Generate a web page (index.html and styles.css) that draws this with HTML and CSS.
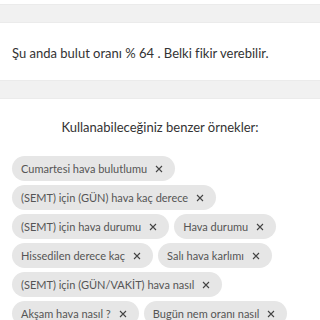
FILE: index.html
```html
<!DOCTYPE html>
<html lang="tr">
<head>
    <meta charset="UTF-8">
    <meta name="viewport" content="width=device-width, initial-scale=1.0">
    <title>Hava durumu</title>
    <link rel="stylesheet" href="styles.css">
</head>
<body>

    <div class="spacer"></div>

    <div class="message">
        <p>Şu anda bulut oranı % 64 . Belki fikir verebilir.</p>
    </div>

    <div class="spacer"></div>

    <div class="examples">
        <h2>Kullanabileceğiniz benzer örnekler:</h2>
        <div class="chip-list">
            <span class="chip">Cumartesi hava bulutlumu <svg class="close" viewBox="0 0 8 8"><path d="M1 1L7 7M7 1L1 7"/></svg></span>
            <span class="chip">(SEMT) için (GÜN) hava kaç derece <svg class="close" viewBox="0 0 8 8"><path d="M1 1L7 7M7 1L1 7"/></svg></span>
            <span class="chip">(SEMT) için hava durumu <svg class="close" viewBox="0 0 8 8"><path d="M1 1L7 7M7 1L1 7"/></svg></span>
            <span class="chip">Hava durumu <svg class="close" viewBox="0 0 8 8"><path d="M1 1L7 7M7 1L1 7"/></svg></span>
            <span class="chip">Hissedilen derece kaç <svg class="close" viewBox="0 0 8 8"><path d="M1 1L7 7M7 1L1 7"/></svg></span>
            <span class="chip">Salı hava karlımı <svg class="close" viewBox="0 0 8 8"><path d="M1 1L7 7M7 1L1 7"/></svg></span>
            <span class="chip">(SEMT) için (GÜN/VAKİT) hava nasıl <svg class="close" viewBox="0 0 8 8"><path d="M1 1L7 7M7 1L1 7"/></svg></span>
            <span class="chip">Akşam hava nasıl ? <svg class="close" viewBox="0 0 8 8"><path d="M1 1L7 7M7 1L1 7"/></svg></span>
            <span class="chip">Bugün nem oranı nasıl <svg class="close" viewBox="0 0 8 8"><path d="M1 1L7 7M7 1L1 7"/></svg></span>
        </div>
    </div>

</body>
</html>
```

FILE: styles.css
```css
* {
    box-sizing: border-box;
    margin: 0;
    padding: 0;
}
body {
    font-family: Lato, Arial, sans-serif;
    background-color: #fff;
    color: #333;
    padding-top: 4px;
}
.spacer {
    height: 19px;
    background-color: #f1f1f1;
    border-top: 1px solid #ebebeb;
    border-bottom: 1px solid #ebebeb;
}
.message {
    height: 57px;
    padding: 2px 12px 0 12px;
    display: flex;
    align-items: center;
}
.message p {
    font-size: 13px;
}
.examples {
    padding: 20px 12px 0 12px;
}
.examples h2 {
    font-size: 13px;
    font-weight: normal;
    text-align: center;
    margin-bottom: 21px;
}
.chip-list {
    display: flex;
    flex-wrap: wrap;
    gap: 4px 5px;
}
.chip {
    display: inline-flex;
    align-items: center;
    height: 25px;
    padding: 0 12px 0 9px;
    border-radius: 13px;
    background-color: #e6e6e6;
    color: #555;
    font-size: 11px;
    white-space: nowrap;
}
.close {
    width: 8px;
    height: 8px;
    margin-left: 8px;
    stroke: #444;
    stroke-width: 1.1;
    fill: none;
}
```
